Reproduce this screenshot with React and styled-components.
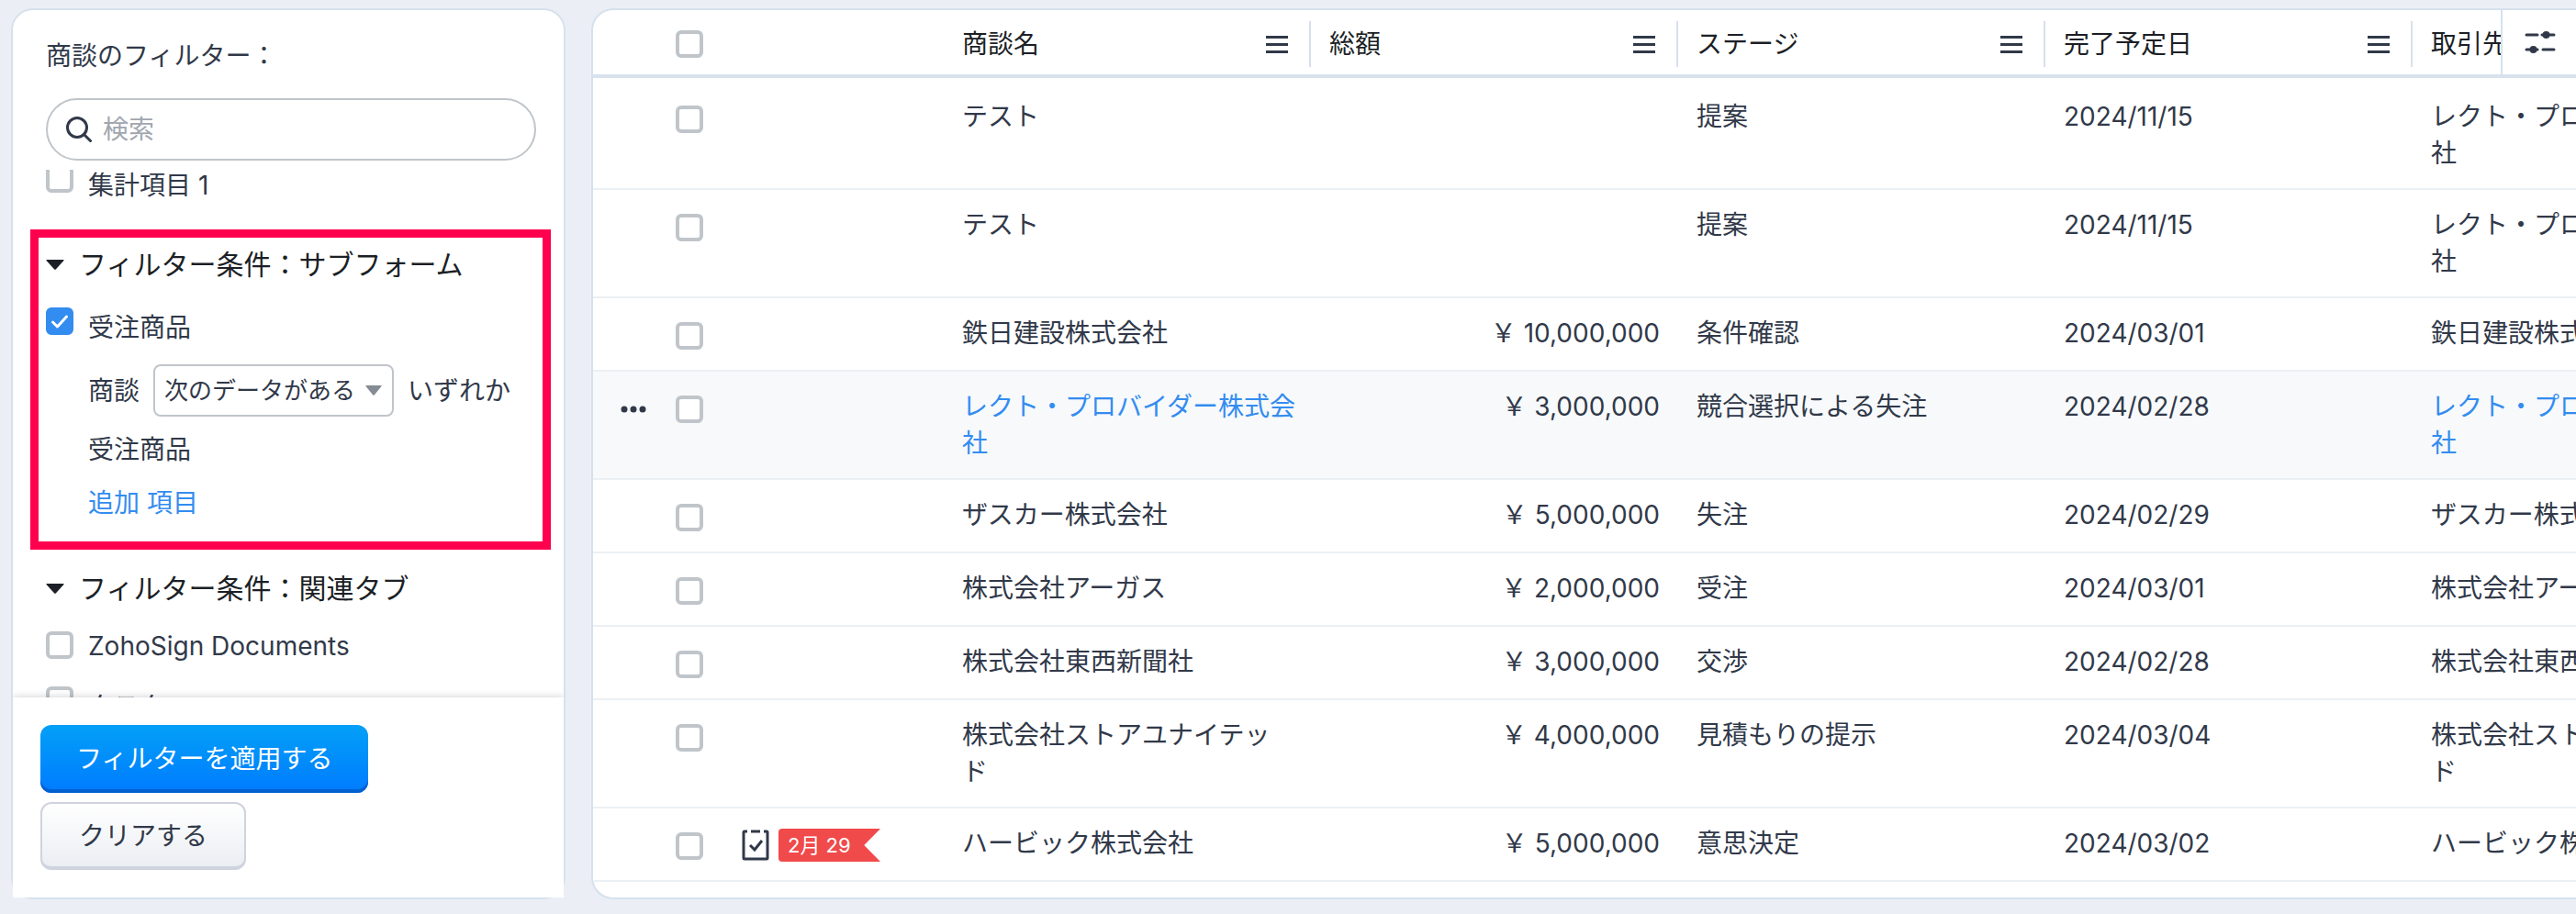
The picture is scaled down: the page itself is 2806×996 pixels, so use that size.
import React from 'react'
import styled, { createGlobalStyle, css } from 'styled-components'

const fontFamily = "Inter, 'Noto Sans CJK JP', sans-serif"
const ink = '#313949'
const heading = '#1c1f26'
const link = '#338cf0'
const line = '#d6e1ed'
const control = '#c0c5ca'

const GlobalStyle = createGlobalStyle`
  *, *::before, *::after {
    box-sizing: border-box;
  }
  body {
    margin: 0;
    background: #ebeff5;
    color: ${ink};
    font-family: ${fontFamily};
    font-size: 28px;
    line-height: 40px;
  }
  button, input, select {
    font: inherit;
    color: inherit;
  }
  a {
    color: inherit;
    text-decoration: none;
  }
`

const Page = styled.div`
  display: flex;
  gap: 28px;
  min-height: 100vh;
  padding: 9px 0 16px 12px;
  overflow: hidden;
`

const Sidebar = styled.aside`
  display: flex;
  flex-direction: column;
  flex: 0 0 604px;
  border: 2px solid ${line};
  border-radius: 24px;
  background: #fff;
`

const SidebarTitle = styled.h2`
  margin: 0;
  padding: 30px 36px 26px;
  font-size: 28px;
  font-weight: 400;
`

const SearchBox = styled.label`
  display: flex;
  align-items: center;
  gap: 12px;
  height: 68px;
  margin: 0 30px 10px 36px;
  padding: 0 20px;
  border: 2px solid ${control};
  border-radius: 34px;
`

const SearchInput = styled.input`
  flex: 1;
  min-width: 0;
  padding: 0;
  border: 0;
  outline: 0;
  background: none;
  &::placeholder {
    color: #a1a6af;
    opacity: 1;
  }
`

const FilterList = styled.div`
  flex: 1 1 0;
  min-height: 0;
  overflow: hidden;
`

const Checkbox = styled.input.attrs({ type: 'checkbox' })`
  appearance: none;
  display: block;
  flex: none;
  width: 30px;
  height: 30px;
  margin: 0;
  border: 4px solid ${control};
  border-radius: 6px;
  background: #fff;
  &:checked {
    border-color: ${link};
    background: ${link}
      url("data:image/svg+xml,%3Csvg xmlns='http://www.w3.org/2000/svg' viewBox='0 0 22 22'%3E%3Cpath d='M3.5 12l5 5L18.5 6' fill='none' stroke='white' stroke-width='3' stroke-linecap='round' stroke-linejoin='round'/%3E%3C/svg%3E");
  }
`

const ScrolledRow = styled.div`
  margin-top: -5px;
  padding: 0 36px 40px;
`

const CheckLabel = styled.label`
  display: flex;
  gap: 16px;
  height: 30px;
  line-height: ${(props) => (props.$latin ? '32px' : '44px')};
`

const Group = styled.section`
  padding: 22px 36px 0;
  ${(props) =>
    props.$marked &&
    css`
      margin: 0 14px 0 19px;
      padding: 9px 8px 20px;
      border: 9px solid #ff004f;
    `}
  label + label {
    margin-top: 30px;
  }
`

const GroupTitle = styled.h3`
  display: flex;
  align-items: center;
  gap: 16px;
  margin: 0 0 27px;
  font-size: 30px;
  font-weight: 400;
  color: ${heading};
`

const Conditions = styled.div`
  display: flex;
  flex-direction: column;
  align-items: flex-start;
  gap: 14px;
  padding: 32px 0 0 46px;
`

const Condition = styled.div`
  display: flex;
  align-items: center;
  gap: 15px;
  line-height: 44px;
  white-space: nowrap;
`

const SelectWrap = styled.span`
  position: relative;
  display: flex;
  align-items: center;
  svg {
    position: absolute;
    right: 13px;
    pointer-events: none;
  }
`

const Select = styled.select`
  appearance: none;
  width: 262px;
  height: 57px;
  padding: 0 10px;
  border: 2px solid ${control};
  border-radius: 8px;
  background: #fff;
  font-size: 26px;
`

const AddLink = styled.a`
  color: ${link};
`

const Footer = styled.footer`
  position: relative;
  display: flex;
  flex-direction: column;
  align-items: flex-start;
  gap: 10px;
  padding: 30px;
  background: #fff;
  box-shadow: 0 0 8px rgba(49, 57, 73, 0.25);
  clip-path: inset(-10px 0 0 0);
`

const Button = styled.button`
  height: 74px;
  padding: 2px 40px 0;
  border: 2px solid #cfd3dd;
  border-bottom-width: 4px;
  border-radius: 12px;
  background: linear-gradient(#fff, #ebeef3);
  ${(props) =>
    props.$primary &&
    css`
      padding: 0 39px;
      border: 0;
      background: linear-gradient(#03a0f7, #007bff);
      box-shadow: inset 0 -4px #0060d0;
      color: #fff;
    `}
`

const TablePanel = styled.main`
  position: relative;
  flex: 1;
  min-width: 0;
  padding-bottom: 17px;
  overflow: hidden;
  border: 2px solid ${line};
  border-right: 0;
  border-radius: 24px 0 0 24px;
  background: #fff;
`

const Table = styled.table`
  width: 2382px;
  table-layout: fixed;
  border-collapse: separate;
  border-spacing: 0;
`

const HeadCell = styled.th`
  height: 74px;
  padding: 4px 0 0;
  border-bottom: 4px solid #d8e2ec;
  color: ${heading};
  font-weight: 400;
  text-align: left;
`

const HeadInner = styled.div`
  display: flex;
  align-items: center;
  justify-content: space-between;
  height: 50px;
  padding: 0 23px 0 20px;
  border-right: 2px solid ${(props) => (props.$plain ? 'transparent' : line)};
`

const IconButton = styled.button`
  display: flex;
  padding: 0;
  border: 0;
  background: none;
  color: ${ink};
`

const ColumnSettings = styled(IconButton)`
  position: absolute;
  top: 0;
  right: 0;
  align-items: center;
  width: 82px;
  height: 70px;
  padding-left: 24px;
  border-left: 2px solid ${line};
  background: #fff;
`

const Row = styled.tr`
  height: 80px;
  background: ${(props) => (props.$active ? '#f7f9fb' : '#fff')};
`

const Spacer = styled.td`
  height: 4px;
  padding: 0;
`

const Cell = styled.td`
  padding: 18px 20px;
  border-bottom: 2px solid #ebf0f4;
  vertical-align: top;
  white-space: pre-line;
  text-align: ${(props) => (props.$right ? 'right' : 'left')};
`

const NameCell = styled(Cell)`
  padding-right: 0;
  color: ${(props) => (props.$active ? link : ink)};
`

const ToolCell = styled(Cell)`
  padding: 26px 20px 0;
`

const MenuCell = styled(Cell)`
  padding: 37px 0 0 30px;
`

const Reminder = styled.div`
  display: flex;
  align-items: center;
  gap: 10px;
  margin-top: -4px;
`

const Flag = styled.span`
  width: 111px;
  padding: 0 10px;
  border-radius: 4px 0 0 4px;
  background: #f04a4b;
  clip-path: polygon(0 0, 100% 0, 84% 50%, 100% 100%, 0 100%);
  color: #fff;
  font-size: 22px;
  line-height: 36px;
  white-space: nowrap;
`

const SearchIcon = () => (
  <svg width="28" height="30" viewBox="0 0 28 30" fill="none" stroke={ink} strokeWidth="3">
    <circle cx="12" cy="13" r="10.5" />
    <path d="M19.5 20.5l7 7" strokeLinecap="round" />
  </svg>
)

const Caret = ({ width = 20, fill = heading }) => (
  <svg width={width} height="11" viewBox="0 0 20 11" preserveAspectRatio="none">
    <path d="M1 0h18q1 0 .4.9L10.8 10.5q-.8.7-1.6 0L.6.9Q0 0 1 0z" fill={fill} />
  </svg>
)

const MenuIcon = () => (
  <svg width="24" height="19" viewBox="0 0 24 19" fill="currentColor">
    <path d="M0 0h24v3H0zM0 8h24v3H0zM0 16h24v3H0z" />
  </svg>
)

const SettingsIcon = () => (
  <svg width="34" height="26" viewBox="0 0 34 26" fill="currentColor" stroke="currentColor" strokeWidth="3">
    <path d="M2 5h12M19 5h13M2 21h12M20 21h12" strokeLinecap="round" />
    <circle cx="23.5" cy="5" r="4" stroke="none" />
    <circle cx="9.5" cy="21" r="4" stroke="none" />
  </svg>
)

const DotsIcon = () => (
  <svg width="28" height="8" viewBox="0 0 28 8" fill="currentColor">
    <circle cx="4" cy="4" r="3.5" />
    <circle cx="14" cy="4" r="3.5" />
    <circle cx="24" cy="4" r="3.5" />
  </svg>
)

const TaskIcon = () => (
  <svg width="30" height="34" viewBox="0 0 30 34" fill="none" stroke={ink} strokeWidth="3">
    <path d="M6 2H3Q2 2 2 3v28q0 1 1 1h24q1 0 1-1V3q0-1-1-1h-3M10 2h10" />
    <path d="M9 17l5 5 8-10" />
  </svg>
)

const columns = ['商談名', '総額', 'ステージ', '完了予定日', '取引先名']

const deals = [
  { name: 'テスト', stage: '提案', date: '2024/11/15', account: 'レクト・プロバイダー株式会\n社' },
  { name: 'テスト', stage: '提案', date: '2024/11/15', account: 'レクト・プロバイダー株式会\n社' },
  { name: '鉄日建設株式会社', amount: '10,000,000', stage: '条件確認', date: '2024/03/01' },
  {
    name: 'レクト・プロバイダー株式会\n社',
    amount: '3,000,000',
    stage: '競合選択による失注',
    date: '2024/02/28',
    active: true,
  },
  { name: 'ザスカー株式会社', amount: '5,000,000', stage: '失注', date: '2024/02/29' },
  { name: '株式会社アーガス', amount: '2,000,000', stage: '受注', date: '2024/03/01' },
  { name: '株式会社東西新聞社', amount: '3,000,000', stage: '交渉', date: '2024/02/28' },
  {
    name: '株式会社ストアユナイテッ\nド',
    amount: '4,000,000',
    stage: '見積もりの提示',
    date: '2024/03/04',
  },
  {
    name: 'ハービック株式会社',
    amount: '5,000,000',
    stage: '意思決定',
    date: '2024/03/02',
    reminder: '2月 29',
  },
]

const DealRow = ({ deal }) => (
  <Row $active={deal.active}>
    <MenuCell>
      {deal.active && (
        <IconButton aria-label="メニュー">
          <DotsIcon />
        </IconButton>
      )}
    </MenuCell>
    <ToolCell>
      <Checkbox aria-label={deal.name} />
    </ToolCell>
    <ToolCell>
      {deal.reminder && (
        <Reminder>
          <TaskIcon />
          <Flag>{deal.reminder}</Flag>
        </Reminder>
      )}
    </ToolCell>
    <NameCell $active={deal.active}>
      <a href="#deal">{deal.name}</a>
    </NameCell>
    <Cell $right>{deal.amount && `￥ ${deal.amount}`}</Cell>
    <Cell>{deal.stage}</Cell>
    <Cell>{deal.date}</Cell>
    <NameCell $active={deal.active}>
      <a href="#account">{deal.account || deal.name}</a>
    </NameCell>
  </Row>
)

const Filters = () => (
  <Sidebar>
    <SidebarTitle>商談のフィルター：</SidebarTitle>
    <SearchBox>
      <SearchIcon />
      <SearchInput type="search" placeholder="検索" aria-label="検索" />
    </SearchBox>
    <FilterList>
      <ScrolledRow>
        <CheckLabel>
          <Checkbox />
          集計項目 1
        </CheckLabel>
      </ScrolledRow>
      <Group $marked>
        <GroupTitle>
          <Caret />
          フィルター条件：サブフォーム
        </GroupTitle>
        <CheckLabel>
          <Checkbox defaultChecked />
          受注商品
        </CheckLabel>
        <Conditions>
          <Condition>
            商談
            <SelectWrap>
              <Select aria-label="条件">
                <option>次のデータがある</option>
              </Select>
              <Caret width={18} fill="#858b94" />
            </SelectWrap>
            いずれか
          </Condition>
          <Condition>受注商品</Condition>
          <Condition>
            <AddLink href="#add">追加 項目</AddLink>
          </Condition>
        </Conditions>
      </Group>
      <Group>
        <GroupTitle>
          <Caret />
          フィルター条件：関連タブ
        </GroupTitle>
        <CheckLabel $latin>
          <Checkbox />
          ZohoSign Documents
        </CheckLabel>
        <CheckLabel>
          <Checkbox />
          タスク
        </CheckLabel>
      </Group>
    </FilterList>
    <Footer>
      <Button $primary>フィルターを適用する</Button>
      <Button>クリアする</Button>
    </Footer>
  </Sidebar>
)

const App = () => (
  <>
    <GlobalStyle />
    <Page>
      <Filters />
      <TablePanel>
        <Table>
          <colgroup>
            <col width="70" />
            <col width="72" />
            <col width="240" />
            {columns.map((name) => (
              <col key={name} width="400" />
            ))}
          </colgroup>
          <thead>
            <tr>
              <HeadCell />
              <HeadCell>
                <HeadInner $plain>
                  <Checkbox aria-label="すべて選択" />
                </HeadInner>
              </HeadCell>
              <HeadCell />
              {columns.map((name) => (
                <HeadCell key={name}>
                  <HeadInner>
                    {name}
                    <IconButton aria-label={`${name} メニュー`}>
                      <MenuIcon />
                    </IconButton>
                  </HeadInner>
                </HeadCell>
              ))}
            </tr>
          </thead>
          <tbody>
            <tr>
              <Spacer colSpan={8} />
            </tr>
            {deals.map((deal, i) => (
              <DealRow key={i} deal={deal} />
            ))}
          </tbody>
        </Table>
        <ColumnSettings aria-label="列の設定">
          <SettingsIcon />
        </ColumnSettings>
      </TablePanel>
    </Page>
  </>
)

export default App
